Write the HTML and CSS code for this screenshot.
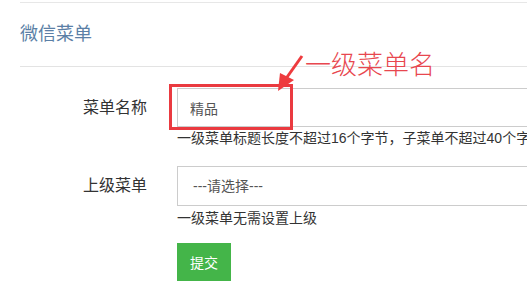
FILE: index.html
```html
<!DOCTYPE html>
<html lang="zh-CN">
<head>
<meta charset="utf-8">
<title>微信菜单</title>
<link rel="stylesheet" href="styles.css">
</head>
<body>
<div class="page">
  <div class="topline"></div>
  <div class="header"><h1 class="title">微信菜单</h1></div>
  <form class="form">
    <div class="field first">
      <label class="label">菜单名称</label>
      <div class="control">
        <input class="input" type="text" value="精品">
        <div class="mark"></div>
      </div>
      <div class="help">一级菜单标题长度不超过16个字节，子菜单不超过40个字节</div>
    </div>
    <div class="field">
      <label class="label">上级菜单</label>
      <div class="control">
        <div class="select">---请选择---</div>
      </div>
      <div class="help tall">一级菜单无需设置上级</div>
    </div>
    <div class="actions">
      <button class="btn" type="button">提交</button>
    </div>
  </form>
  <div class="note">一级菜单名</div>
  <svg class="arrow" width="40" height="44" viewBox="0 0 40 44">
    <path d="M30 1 L13 25" stroke="#ee3b3e" stroke-width="3" fill="none"/>
    <polygon points="6,36 8,18 22,25" fill="#ee3b3e"/>
  </svg>
</div>
</body>
</html>
```
FILE: styles.css
```css
html, body {
  margin: 0;
  padding: 0;
  background: #fff;
  overflow: hidden;
}
body {
  width: 527px;
  height: 291px;
  font-family: "Liberation Sans", "Noto Sans CJK SC", sans-serif;
  color: #333;
}
.page {
  position: relative;
  height: 291px;
  padding-left: 20px;
}
.topline {
  margin-top: 2px;
  border-top: 1px solid #e7e7e7;
}
.header {
  height: 63px;
  display: flex;
  align-items: center;
  border-bottom: 1px solid #e3e3e3;
}
.title {
  margin: 0;
  font-size: 18px;
  font-weight: normal;
  line-height: 24px;
  color: #5b7fa6;
  margin-top: -1px;
}
.form {
  padding-top: 21px;
}
.field {
  display: grid;
  grid-template-columns: 127px 420px;
  column-gap: 30px;
}
.field.first {
  margin-bottom: 17px;
}
.label {
  font-size: 16px;
  line-height: 39px;
  text-align: right;
  color: #333;
}
.control {
  position: relative;
}
.input, .select {
  box-sizing: border-box;
  display: block;
  width: 420px;
  margin: 0;
  border: 1px solid #ccc;
  background: #fff;
  font-family: inherit;
  font-size: 14px;
  color: #555;
  outline: none;
}
.input {
  height: 39px;
  padding: 0 12px;
}
.select {
  height: 40px;
  line-height: 38px;
  padding: 0 15px;
}
.help {
  grid-column: 2;
  font-size: 14px;
  line-height: 22px;
  color: #333;
  white-space: nowrap;
}
.help.tall {
  line-height: 25px;
}
.actions {
  padding-left: 157px;
  margin-top: 12px;
}
.btn {
  width: 54px;
  height: 38px;
  border: 0;
  background: #44b549;
  color: #fff;
  font-family: inherit;
  font-size: 14px;
  padding: 0;
  cursor: pointer;
}
.mark {
  position: absolute;
  left: -8px;
  top: -4px;
  width: 118px;
  height: 40px;
  border: 3px solid #ea3a40;
  pointer-events: none;
}
.note {
  position: absolute;
  left: 305px;
  top: 47px;
  font-family: "Noto Sans CJK SC", sans-serif;
  font-size: 26px;
  line-height: 28px;
  font-weight: 300;
  color: #e8474f;
}
.arrow {
  position: absolute;
  left: 272px;
  top: 53px;
}
```
